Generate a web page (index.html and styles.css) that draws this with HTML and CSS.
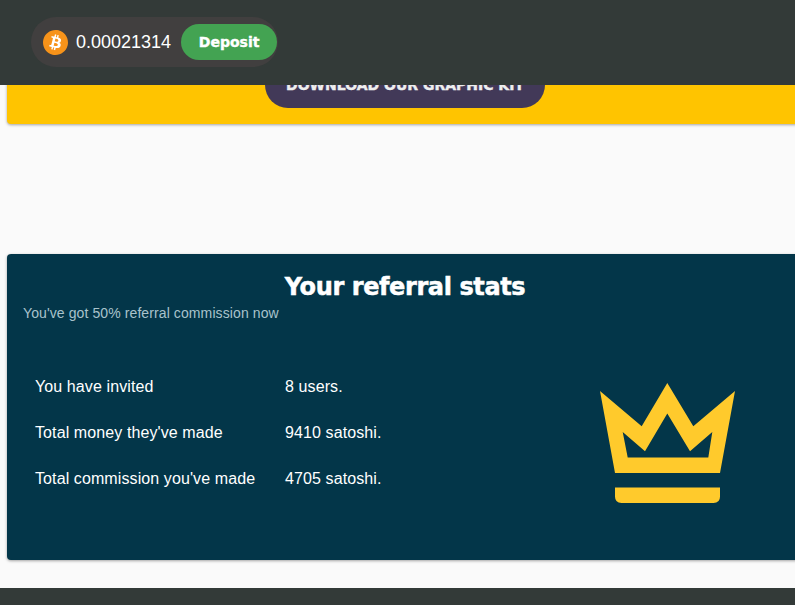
FILE: index.html
```html
<!DOCTYPE html>
<html lang="en">
<head>
  <meta charset="UTF-8" />
  <title>Referral stats</title>
  <link rel="stylesheet" href="styles.css">
</head>
<body>
  <header class="topbar">
    <div class="balance">
      <svg class="btc-icon" viewBox="0 0 24 24" width="25" height="25" aria-hidden="true">
        <circle cx="12" cy="12" r="10" fill="#fff"/>
        <path fill="#f7931a" d="M23.638 14.904c-1.602 6.43-8.113 10.34-14.542 8.736C2.67 22.05-1.244 15.525.362 9.105 1.962 2.67 8.475-1.243 14.9.358c6.43 1.605 10.342 8.115 8.738 14.548v-.002zm-6.35-4.613c.24-1.59-.974-2.45-2.64-3.03l.54-2.153-1.315-.33-.525 2.107c-.345-.087-.705-.167-1.064-.25l.526-2.127-1.32-.33-.54 2.165c-.285-.067-.565-.132-.84-.2l-1.815-.45-.35 1.407s.975.225.955.236c.535.136.63.486.615.766l-1.477 5.92c-.075.166-.24.406-.614.314.015.02-.96-.24-.96-.24l-.66 1.51 1.71.426.93.242-.54 2.19 1.32.327.54-2.17c.36.1.705.19 1.05.273l-.51 2.154 1.32.33.545-2.19c2.24.427 3.93.257 4.64-1.774.57-1.637-.03-2.58-1.217-3.196.854-.193 1.5-.76 1.68-1.93h.01zm-3.01 4.22c-.404 1.64-3.157.75-4.05.53l.72-2.9c.896.23 3.757.67 3.33 2.37zm.41-4.24c-.37 1.49-2.662.735-3.405.55l.654-2.64c.744.18 3.137.524 2.75 2.084v.006z"/>
      </svg>
      <span class="amount">0.00021314</span>
      <button class="deposit">Deposit</button>
    </div>
  </header>

  <main class="page">
    <section class="kit-card">
      <button class="kit-btn">DOWNLOAD OUR GRAPHIC KIT</button>
    </section>

    <section class="stats-card">
      <h2>Your referral stats</h2>
      <p class="note">You've got 50% referral commission now</p>
      <div class="stats-body">
        <div class="stats-list">
          <div class="row"><span class="label">You have invited</span><span>8 users.</span></div>
          <div class="row"><span class="label">Total money they've made</span><span>9410 satoshi.</span></div>
          <div class="row"><span class="label">Total commission you've made</span><span>4705 satoshi.</span></div>
        </div>
        <svg class="crown" viewBox="0 0 135 120" width="135" height="120" aria-hidden="true">
          <path fill="#ffca2c" fill-rule="evenodd" d="M0 8 41.7 43.3 67.3 0 93.3 43.3 135 8 120 90H15ZM22.7 49 27.7 74.6H108.3L112.3 49 90 68.3 67.3 30.6 45 68.3Z"/>
          <path fill="#ffca2c" d="M15 104.6H120V113.5Q120 120 113.5 120H21.5Q15 120 15 113.5Z"/>
        </svg>
      </div>
    </section>
  </main>

  <footer class="bottombar"></footer>
</body>
</html>
```

FILE: styles.css
```css
html, body {
  margin: 0;
  height: 605px;
  overflow: hidden;
}
body {
  font-family: "Liberation Sans", Arial, sans-serif;
  background-color: #fafafa;
  color: #fff;
  position: relative;
}
.topbar {
  position: absolute;
  top: 0;
  left: 0;
  right: 0;
  height: 85px;
  background-color: #333a38;
  display: flex;
  align-items: center;
  padding-left: 31px;
  box-sizing: border-box;
  z-index: 2;
}
.balance {
  display: flex;
  align-items: center;
  height: 50px;
  width: 247px;
  box-sizing: border-box;
  padding-left: 12px;
  margin-top: -1px;
  background-color: #413f3f;
  border-radius: 25px;
}
.btc-icon {
  flex: none;
}
.amount {
  margin-left: 8px;
  font-size: 18px;
}
.deposit {
  margin-left: 10px;
  width: 96px;
  height: 36px;
  border: none;
  border-radius: 18px;
  background-color: #43a352;
  color: #fff;
  font-family: "DejaVu Sans", sans-serif;
  font-weight: bold;
  font-size: 14px;
  -webkit-text-stroke: 0.4px #fff;
  padding: 0;
}
.page {
  width: 796px;
  margin-left: 7px;
}
.kit-card {
  height: 124px;
  box-sizing: border-box;
  padding-bottom: 16px;
  background-color: #ffc400;
  border-radius: 0 0 4px 4px;
  box-shadow: 0 1px 3px rgba(0, 0, 0, 0.35);
  display: flex;
  justify-content: center;
  align-items: flex-end;
}
.kit-btn {
  width: 280px;
  height: 46px;
  border: none;
  border-radius: 23px;
  background-color: #423958;
  color: #eee;
  font-family: "DejaVu Sans", sans-serif;
  font-weight: bold;
  font-size: 14px;
  -webkit-text-stroke: 0.4px #eee;
  padding: 0;
}
.stats-card {
  margin-top: 130px;
  height: 306px;
  box-sizing: border-box;
  padding-top: 18px;
  background-color: #033649;
  border-radius: 4px;
  box-shadow: 0 1px 3px rgba(0, 0, 0, 0.35);
}
.stats-card h2 {
  margin: 0;
  text-align: center;
  font-family: "DejaVu Sans", sans-serif;
  font-size: 24px;
  line-height: 30px;
  letter-spacing: -0.4px;
  -webkit-text-stroke: 0.5px #fff;
}
.note {
  margin: 2px 0 0 16px;
  font-size: 14px;
  line-height: 18px;
  letter-spacing: 0.1px;
  color: #a9c3cc;
}
.stats-body {
  display: flex;
  justify-content: space-between;
  margin-top: 29px;
  padding-left: 28px;
  padding-right: 68px;
}
.stats-list {
  padding-top: 13px;
}
.row {
  display: flex;
  font-size: 16px;
  line-height: 46px;
  letter-spacing: 0.1px;
}
.label {
  width: 250px;
}
.crown {
  margin-top: 32px;
}
.bottombar {
  position: absolute;
  left: 0;
  right: 0;
  bottom: 0;
  height: 17px;
  background-color: #333a38;
}
```
